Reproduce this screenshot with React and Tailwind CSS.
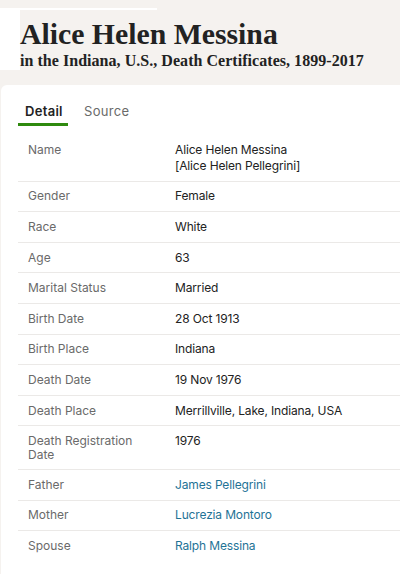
const rows = [
  ["Name", <>Alice Helen Messina<br />[Alice Helen Pellegrini]</>],
  ["Gender", "Female"],
  ["Race", "White"],
  ["Age", "63"],
  ["Marital Status", "Married"],
  ["Birth Date", "28 Oct 1913"],
  ["Birth Place", "Indiana"],
  ["Death Date", "19 Nov 1976"],
  ["Death Place", "Merrillville, Lake, Indiana, USA"],
  ["Death Registration Date", "1976"],
  ["Father", "James Pellegrini", true],
  ["Mother", "Lucrezia Montoro", true],
  ["Spouse", "Ralph Messina", true],
];

export default function App() {
  return (
    <div className="relative w-[400px] h-[574px] overflow-hidden bg-[#f5f2ef] font-['Inter',sans-serif]">
      <div className="absolute left-0 top-[8px] w-[157px] h-[2px] bg-white" />
      <div className="absolute left-0 top-[10px] w-[20px] h-[60px] bg-white" />
      <div className="relative h-[85px] pl-5 pt-[17px]">
        <h1 className="font-['Liberation_Serif',serif] font-bold text-[29.75px] leading-[34px] text-[#222222]">Alice Helen Messina</h1>
        <p className="font-['Liberation_Serif',serif] font-bold text-[16px] leading-[20px] tracking-[0.04px] text-[#222222]">in the Indiana, U.S., Death Certificates, 1899-2017</p>
      </div>
      <div className="bg-white rounded-tl-md ml-px h-[489px] pl-[17px] pt-[17px]">
        <div className="flex gap-4 text-[13px] leading-[18px] tracking-[0.3px]">
          <div className="border-b-[3px] border-[#2f8a0f] pb-[3px] px-[7px] font-semibold text-[#222222] w-[50px] h-[24px]">Detail</div>
          <div className="text-[#6a6a6a]">Source</div>
        </div>
        <div className="mt-[9px]">
          {rows.map(([k, v, link], i) => (
            <div key={i} className={`grid grid-cols-[147px_1fr] pl-[10px] py-[6.8px] text-[12px] ${i < rows.length - 1 ? "border-b border-[#ebe9e7]" : ""}`}>
              <div className="text-[#6a6a6a] pr-[28px] pt-px leading-[14px]">{k}</div>
              <div className={`leading-[16px] tracking-[-0.15px] ${link ? "text-[#1f7396]" : "text-[#222222]"}`}>{v}</div>
            </div>
          ))}
        </div>
      </div>
    </div>
  );
}
